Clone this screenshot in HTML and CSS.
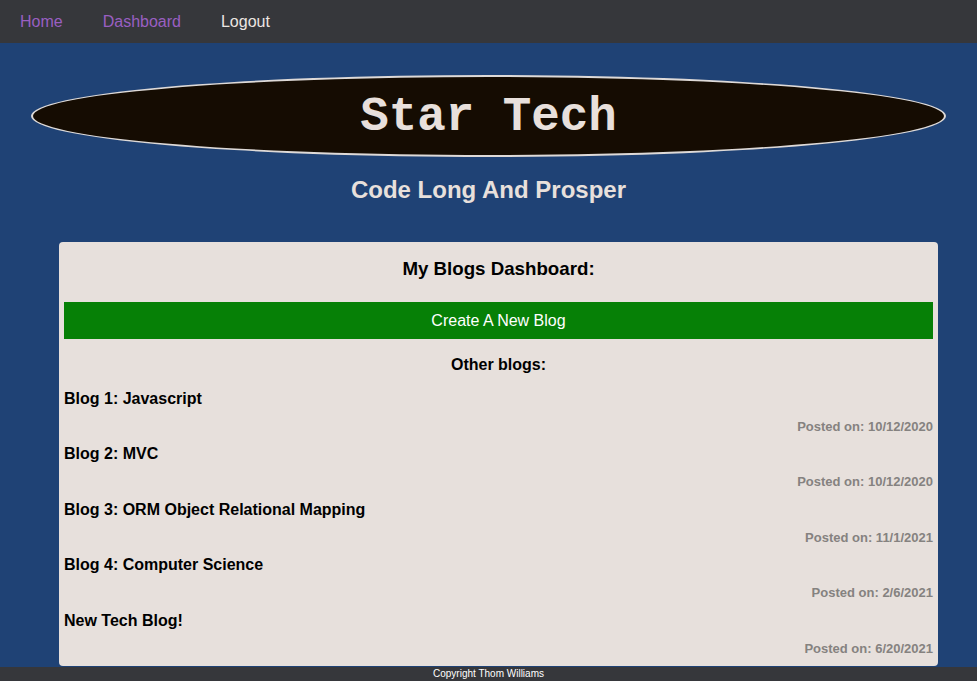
FILE: index.html
```html
<!DOCTYPE html>
<html>
<head>
<meta charset="utf-8">
<link rel="stylesheet" href="styles.css">
</head>
<body>
<nav class="nav">
  <a class="nav-link visited" href="#">Home</a>
  <a class="nav-link visited" href="#">Dashboard</a>
  <a class="nav-link light" href="#">Logout</a>
</nav>
<header class="hero">
  <div class="logo"><h1 class="logo-text">Star Tech</h1></div>
  <h2 class="tagline">Code Long And Prosper</h2>
</header>
<main class="card">
  <h3 class="card-title">My Blogs Dashboard:</h3>
  <button class="new-btn">Create A New Blog</button>
  <h4 class="other">Other blogs:</h4>
  <div class="post"><div class="post-title">Blog 1: Javascript</div><div class="post-date">Posted on: 10/12/2020</div></div>
  <div class="post"><div class="post-title">Blog 2: MVC</div><div class="post-date">Posted on: 10/12/2020</div></div>
  <div class="post"><div class="post-title">Blog 3: ORM Object Relational Mapping</div><div class="post-date">Posted on: 11/1/2021</div></div>
  <div class="post"><div class="post-title">Blog 4: Computer Science</div><div class="post-date">Posted on: 2/6/2021</div></div>
  <div class="post"><div class="post-title">New Tech Blog!</div><div class="post-date">Posted on: 6/20/2021</div></div>
</main>
<footer class="footer">Copyright Thom Williams</footer>
</body>
</html>
```
FILE: styles.css
```css
html, body {
  margin: 0;
  padding: 0;
  height: 100%;
  overflow: hidden;
}
body {
  background: #1f4275;
  font-family: "Liberation Sans", Arial, sans-serif;
}
.nav {
  height: 43px;
  background: #36373b;
  display: flex;
  align-items: center;
}
.nav-link {
  font-size: 16px;
  line-height: 20px;
  text-decoration: none;
  padding: 0 20px;
  margin-top: 1px;
}
.visited { color: #9a5fc2; }
.light { color: #ece6e2; }
.hero {
  padding-top: 32px;
  display: flex;
  flex-direction: column;
  align-items: center;
}
.logo {
  width: 911px;
  height: 78px;
  border: 2px solid #dedad8;
  border-radius: 50%;
  background: #150c02;
  display: flex;
  align-items: center;
  justify-content: center;
}
.logo-text {
  margin: 2px 0 0;
  font-family: "Liberation Mono", "Courier New", monospace;
  font-weight: bold;
  font-size: 47.5px;
  color: #e8e0dc;
  line-height: 50px;
}
.tagline {
  margin: 19px 0 0;
  font-size: 24px;
  line-height: 28px;
  color: #e8e0dc;
}
.card {
  margin: 38px 39px 0 59px;
  background: #e7e0dc;
  border-radius: 4px;
  padding: 0 5px 9px;
}
.card-title {
  margin: 0;
  padding-top: 16px;
  text-align: center;
  font-size: 18.72px;
  line-height: 22px;
}
.new-btn {
  display: block;
  width: 100%;
  margin-top: 22px;
  height: 37px;
  border: none;
  background: #068006;
  color: #fff;
  font-family: "Liberation Sans", Arial, sans-serif;
  font-size: 16px;
  padding: 0;
}
.other {
  margin: 16px 0 0;
  text-align: center;
  font-size: 16px;
  line-height: 20px;
}
.post {
  margin-top: 14px;
}
.post + .post {
  margin-top: 9.4px;
}
.post-title {
  font-weight: bold;
  font-size: 16px;
  line-height: 20px;
}
.post-date {
  margin-top: 10px;
  text-align: right;
  font-weight: bold;
  font-size: 13px;
  line-height: 16px;
  color: #858280;
}
.footer {
  position: fixed;
  left: 0;
  right: 0;
  bottom: 0;
  height: 14px;
  background: #36373b;
  color: #fff;
  font-size: 10px;
  line-height: 14px;
  text-align: center;
}
```
